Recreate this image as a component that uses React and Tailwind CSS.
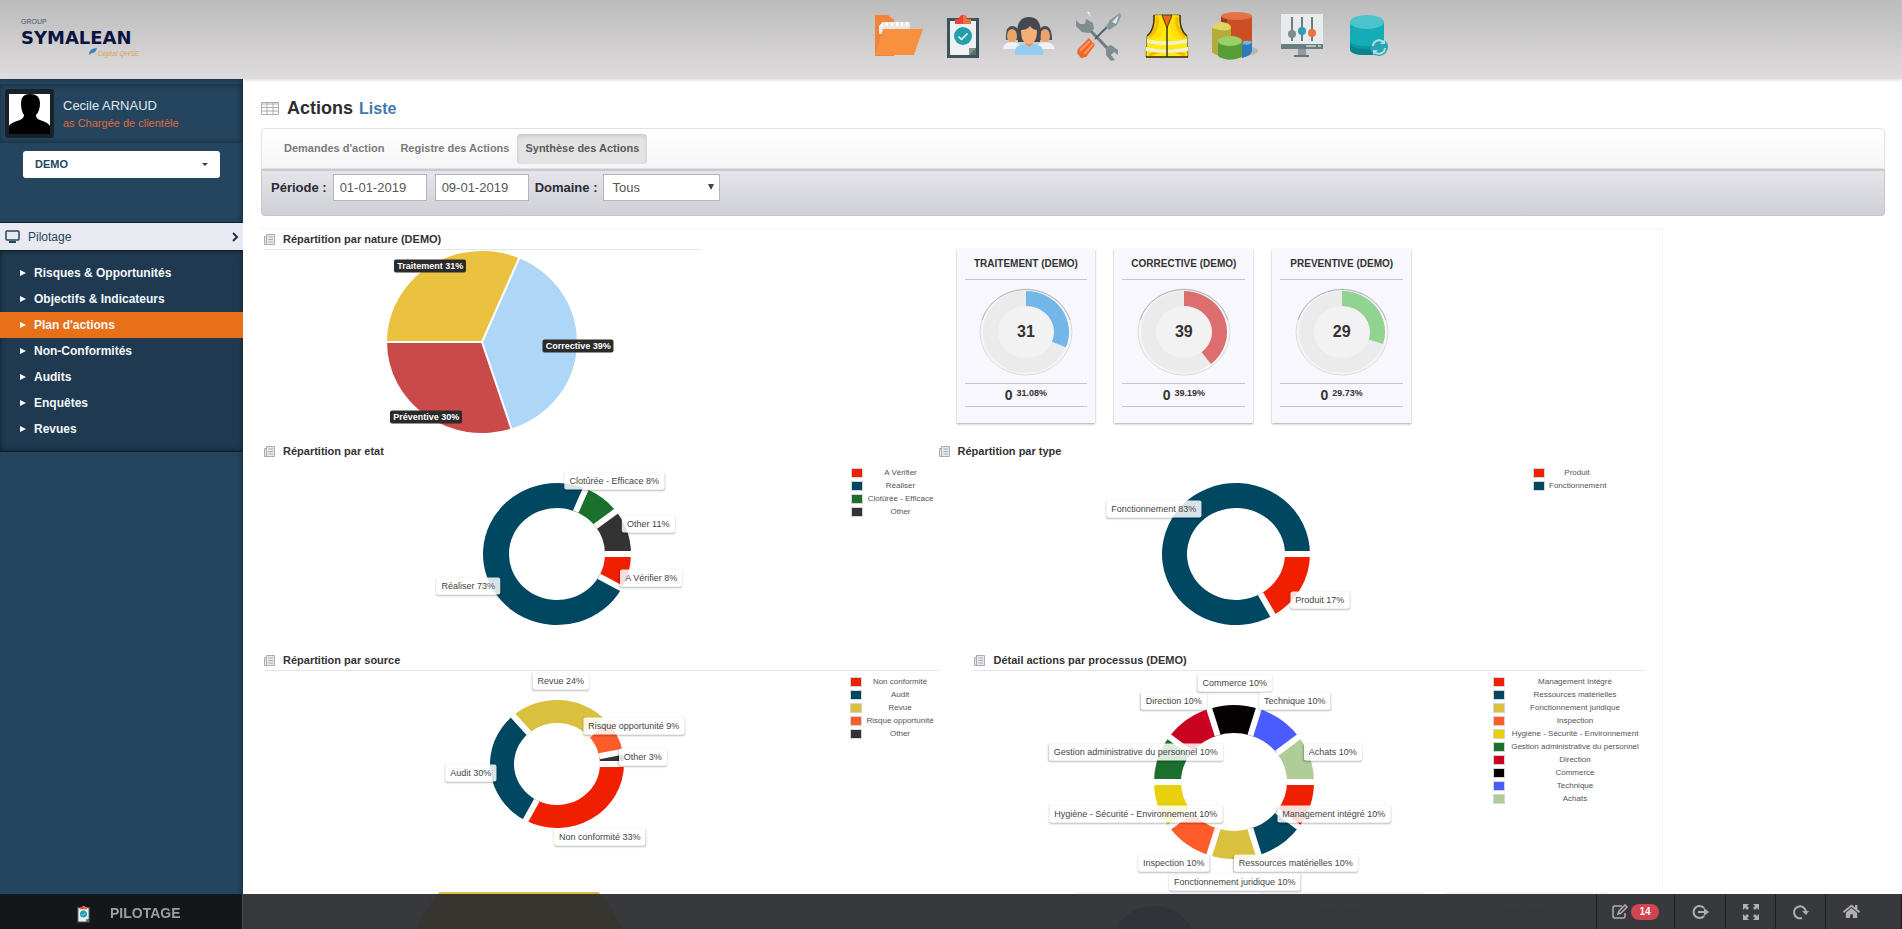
import { useState } from 'react';
import { FaHome } from 'react-icons/fa';

const MENU = ['Risques & Opportunités', 'Objectifs & Indicateurs', "Plan d'actions", 'Non-Conformités', 'Audits', 'Enquêtes', 'Revues'];
const TABS = ["Demandes d'action", 'Registre des Actions', 'Synthèse des Actions'];

const NATURE = [
    { label: 'Corrective 39%', from: -67, to: 72, color: '#aed6f7', dx: 96, dy: 4 },
    { label: 'Préventive 30%', from: 72, to: 180, color: '#c94a49', dx: -56, dy: 75 },
    { label: 'Traitement 31%', from: 180, to: 293, color: '#ebc23f', dx: -52, dy: -76 },
];

const ETAT = [
    { name: 'A Vérifier', label: 'A Vérifier 8%', from: 0, to: 29, color: '#f01f00', dx: 94, dy: 24 },
    { name: 'Réaliser', label: 'Réaliser 73%', from: 29, to: 293, color: '#004761', dx: -89, dy: 32 },
    { name: 'Clotûrée - Efficace', label: 'Clotûrée - Efficace 8%', from: 293, to: 323, color: '#1c702e', dx: 57, dy: -73 },
    { name: 'Other', label: 'Other 11%', from: 323, to: 360, color: '#333333', dx: 91, dy: -30 },
];

const TYPE = [
    { name: 'Produit', label: 'Produit 17%', from: 0, to: 60, color: '#f01f00', dx: 84, dy: 46 },
    { name: 'Fonctionnement', label: 'Fonctionnement 83%', from: 60, to: 360, color: '#004761', dx: -82, dy: -45 },
];

const SOURCE = [
    { name: 'Non conformité', label: 'Non conformité 33%', from: 0, to: 118, color: '#f01f00', dx: 43, dy: 73 },
    { name: 'Audit', label: 'Audit 30%', from: 118, to: 229, color: '#004761', dx: -86, dy: 9 },
    { name: 'Revue', label: 'Revue 24%', from: 229, to: 316, color: '#d9c13f', dx: 4, dy: -83 },
    { name: 'Risque opportunité', label: 'Risque opportunité 9%', from: 316, to: 349, color: '#ff5c2b', dx: 77, dy: -38 },
    { name: 'Other', label: 'Other 3%', from: 349, to: 360, color: '#333333', dx: 86, dy: -7 },
];

const PROCESSUS = [
    { name: 'Management Intégré', label: 'Management intégré 10%', from: 0, to: 36, color: '#f01f00', dx: 100, dy: 32 },
    { name: 'Ressources matérielles', label: 'Ressources matérielles 10%', from: 36, to: 72, color: '#004761', dx: 62, dy: 81 },
    { name: 'Fonctionnement juridique', label: 'Fonctionnement juridique 10%', from: 72, to: 108, color: '#d9c13f', dx: 1, dy: 100 },
    { name: 'Inspection', label: 'Inspection 10%', from: 108, to: 144, color: '#ff5c2b', dx: -60, dy: 81 },
    { name: 'Hygiène - Sécurité - Environnement', label: 'Hygiène - Sécurité - Environnement 10%', from: 144, to: 180, color: '#e8d10c', dx: -98, dy: 32 },
    { name: 'Gestion administrative du personnel', label: 'Gestion administrative du personnel 10%', from: 180, to: 216, color: '#1c702e', dx: -98, dy: -30 },
    { name: 'Direction', label: 'Direction 10%', from: 216, to: 252, color: '#c90221', dx: -60, dy: -81 },
    { name: 'Commerce', label: 'Commerce 10%', from: 252, to: 288, color: '#050003', dx: 1, dy: -99 },
    { name: 'Technique', label: 'Technique 10%', from: 288, to: 324, color: '#4a5cff', dx: 61, dy: -81 },
    { name: 'Achats', label: 'Achats 10%', from: 324, to: 360, color: '#b0cc99', dx: 99, dy: -30 },
];

const KPIS = [
    { title: 'TRAITEMENT (DEMO)', value: 31, pct: 31.08, color: '#72b6ea' },
    { title: 'CORRECTIVE (DEMO)', value: 39, pct: 39.19, color: '#dd6e6f' },
    { title: 'PREVENTIVE (DEMO)', value: 29, pct: 29.73, color: '#91d391' },
];

const point = (cx, cy, rx, ry, deg) => {
    const a = (deg * Math.PI) / 180;
    return [cx + rx * Math.cos(a), cy + ry * Math.sin(a)];
};

const slicePath = (cx, cy, rx, ry, ix, iy, from, to) => {
    const big = to - from > 180 ? 1 : 0;
    const [x1, y1] = point(cx, cy, rx, ry, from);
    const [x2, y2] = point(cx, cy, rx, ry, to);
    const [x3, y3] = point(cx, cy, ix, iy, to);
    const [x4, y4] = point(cx, cy, ix, iy, from);
    return `M${x1} ${y1}A${rx} ${ry} 0 ${big} 1 ${x2} ${y2}L${x3} ${y3}A${ix} ${iy} 0 ${big} 0 ${x4} ${y4}Z`;
};

const Chart = ({ data, cy, rx, ry, ix, iy, gap, dark }) => (
    <div className="relative flex-1">
        <svg width="400" height={cy + ry + 2} className="mx-auto block">
            {data.map(d => (
                <path key={d.label} d={slicePath(200, cy, rx, ry, ix, iy, d.from, d.to)} fill={d.color} />
            ))}
            {data.map(d => {
                const [x1, y1] = point(200, cy, ix, iy, d.from);
                const [x2, y2] = point(200, cy, rx + 2, ry + 2, d.from);
                return <line key={d.label} x1={x1} y1={y1} x2={x2} y2={y2} stroke="#fff" strokeWidth={gap} />;
            })}
        </svg>
        {data.map(d => (
            <span
                key={d.label}
                className={`absolute -translate-x-1/2 -translate-y-1/2 whitespace-nowrap rounded-[2px] text-[9px] ${dark
                    ? 'bg-[#2b2b2b] px-[3px] leading-[13px] font-bold text-white'
                    : 'bg-white/85 px-[5px] leading-[17px] text-[#444] shadow-[0_1px_2px_rgba(0,0,0,0.25)]'
                    }`}
                style={{ left: `calc(50% + ${d.dx}px)`, top: cy + d.dy }}
            >
                {d.label}
            </span>
        ))}
    </div>
);

const Legend = ({ data }) => (
    <ul className="pt-1">
        {data.map(d => (
            <li key={d.name} className="flex h-[13px] items-center">
                <span className="border border-[#d5d5d5]">
                    <span className="block h-2 w-[10px]" style={{ backgroundColor: d.color }} />
                </span>
                <span className="flex-1 whitespace-nowrap px-1 text-center text-[8px] leading-[13px] text-[#545454]">{d.name}</span>
            </li>
        ))}
    </ul>
);

const PanelTitle = ({ children, line }) => (
    <h3 className={`flex h-[21px] items-center gap-2 border-b text-[11px] font-bold text-[#333] ${line ? 'border-[#e5e5e5]' : 'border-transparent'}`}>
        <svg width="11" height="11" viewBox="0 0 11 11" fill="none" stroke="#a9adb3">
            <path d="M2.500.5h8v10h-10v-8h2zM2.500 1v9" fill="#e6e8eb" />
            <path d="M4.500 3h4.500M4.500 5.500h4.500M4.500 8h4.500" />
        </svg>
        {children}
    </h3>
);

const KpiCard = ({ kpi }) => (
    <div className="flex-1 bg-[#f7f7fd] px-2 pb-4 text-center text-[#333] shadow-[0_1px_2px_rgba(0,0,0,0.35)]">
        <h4 className="whitespace-nowrap border-b border-[#c4c6cf] text-[10px] leading-[30px] font-bold">{kpi.title}</h4>
        <div className="relative flex h-[103px] items-center justify-center">
            <svg width="96" height="92" viewBox="0 0 96 92">
                <ellipse cx="48" cy="46" rx="46" ry="43" fill="#f5f5f7" stroke="#dcdcdf" />
                <path d="M4 34A46 43 0 0 1 92 34" fill="none" stroke="#b4b6ba" />
                <ellipse cx="48" cy="46" rx="43" ry="41" fill="#ebebeb" />
                <ellipse cx="48" cy="46" rx="28" ry="26" fill="#f2f2f2" />
                <path d={slicePath(48, 46, 43, 41, 28, 26, -90, -90 + kpi.pct * 3.6)} fill={kpi.color} />
            </svg>
            <span className="absolute text-[16px] font-bold">{kpi.value}</span>
        </div>
        <p className="h-6 border-y border-[#c4c6cf] text-[14px] leading-[22px] font-bold">
            0 <sup className="text-[9px]">{kpi.pct}%</sup>
        </p>
    </div>
);

const Clipboard = ({ className }) => (
    <svg viewBox="0 0 34 46" className={className}>
        <path d="M1 5h32v40H1z" fill="#3b5359" />
        <path d="M4 8h26v27l-7 7H4z" fill="#eef1f1" />
        <path d="M23 42v-7h7z" fill="#7e9294" />
        <path d="M23 42h7v-7z" fill="#5b7174" />
        <path d="M9 11V6h4a4 4 0 0 1 8 0h4v5z" fill="#e8453c" />
        <path d="M17 2a4 4 0 0 1 4 4h4v5h-8z" fill="#f2703f" />
        <circle cx="17" cy="23" r="9" fill="#239fae" />
        <path d="M12.500 23.500l3 3 6-6" fill="none" stroke="#fff" strokeWidth="1.500" />
    </svg>
);

const Folder = () => (
    <svg viewBox="0 0 48 48" className="size-12">
        <path d="M0 4q0-1 1-1h12l6 5v36H0z" fill="#f08537" />
        <path d="M4 14l4-4h27v12H4z" fill="#e6e8ea" />
        <path d="M4 15l4-5v5z" fill="#fff" />
        <path d="M12 10v4M17 10v4M22 10v4M27 10v4M32 10v4" stroke="#fff" strokeWidth="2" />
        <path d="M8 17h40l-9 26H0z" fill="#f9903e" />
    </svg>
);

const Team = () => (
    <svg viewBox="0 0 52 46" className="h-[46px] w-[52px]">
        <path d="M3 27q-1-14 6-14 8 0 8 14zM35 27q0-14 7-14t7 14z" fill="#4b4e55" />
        <ellipse cx="9" cy="23" rx="5" ry="7" fill="#eaa56b" />
        <ellipse cx="42" cy="23" rx="5" ry="7" fill="#eaa56b" />
        <path d="M0 36q1-7 9-7t9 7zM34 36q0-7 8-7t10 7z" fill="#eef2f7" />
        <path d="M15 29Q11 4 26 4t11 25z" fill="#45484e" />
        <path d="M22 25h8v9h-8z" fill="#dd9460" />
        <path d="M18 17q6 0 9-4 3 4 7 4 0 14-8 14t-8-14z" fill="#f2b077" />
        <path d="M12 42v-4q0-6 10-7l4 3 4-3q10 1 10 7v4z" fill="#92cdf1" />
    </svg>
);

const Tools = () => (
    <svg viewBox="0 0 48 50" className="h-[50px] w-12">
        <path d="M12 16l23 24" stroke="#6e7b80" strokeWidth="3" />
        <path d="M1 9l4 4 5 0 1-5 7 4 1 6-5 4-7-1-6-6zM31 36l5-2 7 5v5l-4-3-3 3 4 5-4 1-5-6z" fill="#7f8c90" />
        <path d="M20 28L39 9" stroke="#55646a" strokeWidth="2" />
        <path d="M35 9l10-7 1 3-4 9-8 5-3-3z" fill="#87969a" />
        <path d="M37 11l7-7-3 9z" fill="#dfe8ea" />
        <path d="M3 38l11-11 6 7-9 12-5 1-4-5z" fill="#f3642a" />
        <path d="M5 40l10-10M9 43l9-10" stroke="#ff9a58" strokeWidth="2" />
        <path d="M12 1l4 5-2-5z" fill="#fff" />
    </svg>
);

const Vest = () => (
    <svg viewBox="0 0 44 46" className="h-[46px] w-11">
        <path d="M9 2h9l4 10 4-10h9q-1 16 7 21l1 21H1l1-21Q10 18 9 2z" fill="#fdea10" stroke="#8d7a10" />
        <path d="M9 3l8-1 3 8-4 14-14 5 1-6Q10 18 9 3zM35 3l-8-1-3 8 4 14 14 5-1-6Q34 18 35 3z" fill="#ffe000" />
        <path d="M12 4q2 12-8 20M32 4q-2 12 8 20M4 42l14-5M40 42l-14-5" fill="none" stroke="#f7b900" strokeWidth="3" />
        <path d="M17 2h10l-5 13z" fill="#ee6a17" stroke="#4b3a10" />
        <path d="M2 26q20 5 40 0v4q-20 4-40 0zM1 34q21 5 42 0v4q-21 4-42 0z" fill="#f1f2c9" />
        <path d="M22 14v30M9 2q1 15-7 21M35 2q-1 15 7 21M1 44h42" fill="none" stroke="#3c3510" strokeWidth="1.500" />
    </svg>
);

const Cylinders = () => (
    <svg viewBox="0 0 48 50" className="h-[50px] w-12">
        <ellipse cx="32" cy="40" rx="15" ry="5" fill="#8e8e8e" opacity=".4" />
        <path d="M10 5v32h31V5z" fill="#cc4e25" />
        <path d="M10 5v32h6V5z" fill="#9f3719" />
        <ellipse cx="25.500" cy="5" rx="15.500" ry="4" fill="#e57345" />
        <path d="M1 17v24q6 6 19 5V17z" fill="#b4ab3a" />
        <path d="M1 17q2-6 10-6 9 1 9 6-4 5-19 0z" fill="#ded663" />
        <path d="M7 30v15q10 7 24 1V30z" fill="#569d35" />
        <ellipse cx="19" cy="30" rx="12" ry="5" fill="#9bcf67" />
        <path d="M31 33v14q9-2 10-7v-9z" fill="#2f78ba" />
        <path d="M31 33l2-3q6-1 8 1-2 4-10 2z" fill="#78b5e4" />
    </svg>
);

const Monitor = () => (
    <svg viewBox="0 0 42 46" className="h-[46px] w-[42px]">
        <path d="M0 1h42v31H0z" fill="#e8ebec" />
        <path d="M0 31h42v5H0z" fill="#6b7d80" />
        <path d="M17 36h8v6h-8z" fill="#8e9c9f" />
        <path d="M13 42h15v2H13z" fill="#64767a" />
        <path d="M25 33h10M37 33h3" stroke="#fff" />
        <path d="M11 4v24M21 4v24M31 4v24" stroke="#44595e" strokeWidth="1.500" />
        <circle cx="11" cy="21" r="4" fill="#7d8b8e" />
        <circle cx="21" cy="18" r="4" fill="#2c9fb5" />
        <circle cx="31" cy="20" r="4" fill="#f2703f" />
    </svg>
);

const Database = () => (
    <svg viewBox="0 0 40 46" className="h-[46px] w-10">
        <path d="M1 9v27q0 6 17 6t17-6V9z" fill="#0b98a3" />
        <path d="M1 9v18q0 6 17 6t17-6V9z" fill="#12adb6" />
        <path d="M1 36q0 6 17 6t17-6v-5q-2 5-17 5T1 31z" fill="#0a8590" />
        <ellipse cx="18" cy="9" rx="17" ry="7" fill="#4dc4cd" />
        <circle cx="30" cy="34" r="9" fill="#2aa3b3" />
        <path d="M24 33a6 6 0 0 1 11-3M36 35a6 6 0 0 1-11 3" fill="none" stroke="#a9e0e6" strokeWidth="2" />
        <path d="M36 26v5h-5zM24 42v-5h5z" fill="#a9e0e6" />
    </svg>
);

const Logo = () => (
    <svg width="124" height="44" viewBox="0 0 124 44">
        <text x="0" y="8" fontFamily="Liberation Sans" fontSize="7" fill="#4a5068">GROUP</text>
        <text x="0" y="28" fontFamily="DejaVu Sans" fontWeight="bold" fontSize="18" fill="#0a1440">SYMALEAN</text>
        <path d="M68 39q0-7 8-7-1 5-5 5z" fill="#3b86b8" />
        <text x="77" y="40" fontFamily="Liberation Sans" fontStyle="italic" fontSize="7" fill="#d9a45a">Digital QHSE</text>
    </svg>
);

const Header = () => (
    <header className="relative z-10 flex h-[79px] bg-linear-to-b from-[#bcbcbc] to-[#dfdcdd] shadow-[0_1px_3px_rgba(0,0,0,0.15)]">
        <a href="#accueil" className="w-[46%] pt-4 pl-[21px]"><Logo /></a>
        <nav className="flex h-[71px] items-center gap-5">
            <a href="#documents"><Folder /></a>
            <a href="#pilotage" className="px-[3px]"><Clipboard className="h-[46px] w-[34px]" /></a>
            <a href="#equipe"><Team /></a>
            <a href="#outils"><Tools /></a>
            <a href="#securite" className="px-0.5"><Vest /></a>
            <a href="#statistiques"><Cylinders /></a>
            <a href="#reglages" className="px-0.5"><Monitor /></a>
            <a href="#donnees" className="pl-1"><Database /></a>
        </nav>
    </header>
);

const Sidebar = () => (
    <aside className="w-[243px] shrink-0 bg-[#25455f] shadow-[inset_-3px_0_4px_rgba(0,0,0,0.2)]">
        <div className="mt-[5px] flex items-center gap-[9px] border-y border-[#1d374d] py-1 pl-[5px] shadow-[inset_0_0_5px_rgba(0,0,0,0.35)]">
            <svg width="49" height="49" viewBox="0 0 49 49">
                <rect width="49" height="49" rx="3" fill="#1b2128" />
                <path d="M4 5h41v40H4z" fill="#fff" />
                <path d="M4 45V37q1-3 11-6 4-2 4-5-3-4-3-12 0-9 9-9 10 0 10 9 0 8-4 12 0 4 4 5 9 3 10 6v8z" fill="#000" />
            </svg>
            <div>
                <p className="text-[13px] leading-[18px] text-[#dfe9f2]">Cecile ARNAUD</p>
                <p className="text-[11px] leading-[16px] text-[#e0683a]">as Chargée de clientèle</p>
            </div>
        </div>
        <div className="relative mx-[23px] mt-2 mb-11">
            <select aria-label="Société" className="block h-[27px] w-full appearance-none rounded-[3px] bg-white px-3 text-[11px] font-bold text-[#25455f]">
                <option>DEMO</option>
            </select>
            <span className="pointer-events-none absolute top-3 right-3 border-x-[3px] border-t-[3px] border-x-transparent border-t-[#25455f]" />
        </div>
        <button className="flex h-7 w-full items-center gap-2 border-t border-[#10202e] bg-[#e8e9f1] pr-1 pl-[5px] text-left text-[12px] text-[#25455f]">
            <svg width="15" height="13" viewBox="0 0 15 13" fill="none" stroke="#25455f" strokeWidth="1.500">
                <rect x="1" y="1" width="13" height="9" rx="1" />
                <path d="M4 12h7" strokeWidth="2" />
            </svg>
            <span className="flex-1">Pilotage</span>
            <svg width="7" height="10" viewBox="0 0 7 10" fill="none" stroke="#1b3346" strokeWidth="2">
                <path d="M1 1l4 4-4 4" />
            </svg>
        </button>
        <ul className="border-y border-[#0f1f2c] bg-[#1f3a50] py-[9px] shadow-[inset_0_0_5px_rgba(0,0,0,0.5)]">
            {MENU.map(item => (
                <li key={item}>
                    <a
                        href="#menu"
                        className={`flex h-[26px] items-center gap-2 pl-5 text-[12px] font-bold text-[#f4f7fa] ${item === "Plan d'actions" ? 'bg-[#e87019]' : ''}`}
                    >
                        <svg width="6" height="6" viewBox="0 0 6 6"><path d="M0 0l6 3-6 3z" fill="#fff" /></svg>
                        {item}
                    </a>
                </li>
            ))}
        </ul>
    </aside>
);

const Filters = () => {
    const [start, setStart] = useState('01-01-2019');
    const [end, setEnd] = useState('09-01-2019');

    return (
        <form className="flex h-[47px] items-start rounded-b border border-t-2 border-[#c8c8cd] bg-linear-to-b from-[#e4e4ea] to-[#cfcfd6] px-[9px] pt-[3px] text-[13px] text-[#555]">
            <label htmlFor="start" className="mr-1.5 leading-[27px] font-bold text-[#2b2b33]">Période :</label>
            <input id="start" value={start} onChange={e => setStart(e.target.value)} className="h-[27px] w-[94px] border border-[#b5b5bd] bg-white px-1.5" />
            <input aria-label="Fin de période" value={end} onChange={e => setEnd(e.target.value)} className="mr-1.5 ml-2 h-[27px] w-[94px] border border-[#b5b5bd] bg-white px-1.5" />
            <label htmlFor="domaine" className="mr-1.5 leading-[27px] font-bold text-[#2b2b33]">Domaine :</label>
            <div className="relative">
                <select id="domaine" className="block h-[27px] w-[117px] appearance-none border border-[#b5b5bd] bg-white px-2">
                    <option>Tous</option>
                </select>
                <span className="pointer-events-none absolute top-[10px] right-[6px] border-x-[3px] border-t-[6px] border-x-transparent border-t-[#444]" />
            </div>
        </form>
    );
};

const Footer = () => (
    <footer className="fixed inset-x-0 bottom-0 z-20 flex h-[35px] bg-[#292a2e]/93 text-[#b0b0b0]">
        <div className="flex w-[243px] items-center gap-[19px] border-r border-[#4a4b50] bg-[#15161a] pt-1 pl-[76px]">
            <Clipboard className="h-[18px] w-[15px]" />
            <span className="text-[14px] font-bold text-[#9d9d9f]">PILOTAGE</span>
        </div>
        <div className="ml-auto flex divide-x divide-[#1c1d20] border-x border-[#1c1d20] pr-6">
            <button aria-label="Notes" className="flex w-[78px] items-center justify-center gap-0.5">
                <svg width="17" height="16" viewBox="0 0 17 16" fill="none" stroke="currentColor" strokeWidth="1.500">
                    <path d="M10 2H3Q1 2 1 4v8q0 2 2 2h8q2 0 2-2V9" />
                    <path d="M6 10l1-3 6-6 2 2-6 6z" />
                </svg>
                <span className="rounded-full bg-[#cf4650] px-2 text-[10px] leading-4 font-bold text-white">14</span>
            </button>
            <button aria-label="Déconnexion" className="flex w-[51px] items-center justify-center">
                <svg width="18" height="16" viewBox="0 0 18 16" fill="none" stroke="currentColor" strokeWidth="2">
                    <path d="M13 4a6 6 0 1 0 0 8M7 8h7" />
                    <path d="M13 4l5 4-5 4z" fill="currentColor" stroke="none" />
                </svg>
            </button>
            <button aria-label="Plein écran" className="flex w-[50px] items-center justify-center">
                <svg width="16" height="16" viewBox="0 0 16 16" fill="currentColor">
                    <path d="M0 0h6L4 2l2 2-2 2-2-2-2 2zM16 0v6l-2-2-2 2-2-2 2-2-2-2zM0 16v-6l2 2 2-2 2 2-2 2 2 2zM16 16h-6l2-2-2-2 2-2 2 2 2-2z" />
                </svg>
            </button>
            <button aria-label="Actualiser" className="flex w-[50px] items-center justify-center">
                <svg width="17" height="16" viewBox="0 0 17 16" fill="none" stroke="currentColor" strokeWidth="2">
                    <path d="M10 14a6 6 0 1 1 4-6" />
                    <path d="M10 7h7l-3 4z" fill="currentColor" stroke="none" />
                </svg>
            </button>
            <a href="#accueil" aria-label="Accueil" className="flex w-[51px] items-center justify-center">
                <FaHome size={17} />
            </a>
        </div>
    </footer>
);

export default function App() {
    const [tab, setTab] = useState(TABS[2]);

    return (
        <div className="flex h-screen flex-col overflow-hidden bg-white font-['Liberation_Sans',Arial,sans-serif]">
            <Header />
            <div className="flex min-h-0 flex-1">
                <Sidebar />
                <main className="min-w-0 flex-1 pr-[17px] pl-[18px]">
                    <h1 className="flex h-[49px] items-center pt-[10px] text-[18px] font-bold text-[#2e2e2e]">
                        <svg width="18" height="13" viewBox="0 0 18 13" fill="none" stroke="#a9adb3" className="mr-2">
                            <path d="M.5.5h17v12H.5zM.5 2h17M.5 5.500h17M.5 9h17M6 1v12M12 1v12" />
                        </svg>
                        Actions
                        <small className="ml-[6px] text-[16px] text-[#3f79ad]">Liste</small>
                    </h1>
                    <nav className="flex h-[41px] items-center rounded-t border border-[#e2e2e2] bg-linear-to-b from-white to-[#f5f5f5] pl-[14px] text-[11px] font-bold text-[#7a7a7a]">
                        {TABS.map(t => (
                            <button
                                key={t}
                                onClick={() => setTab(t)}
                                className={`h-[30px] rounded-sm px-2 ${t === tab ? 'bg-[#e3e3e3] text-[#5a5a5a] shadow-[inset_0_2px_4px_rgba(0,0,0,0.12)]' : ''}`}
                            >
                                {t}
                            </button>
                        ))}
                    </nav>
                    <Filters />

                    <div className="mt-3 mr-[222px] border-t border-r border-[#f3f3f3] pl-[3px]">
                        {/* Nature + indicators */}
                        <div className="grid h-[212px] grid-cols-[437fr_256fr_455fr_251fr]">
                            <section className="flex flex-col">
                                <PanelTitle line>Répartition par nature (DEMO)</PanelTitle>
                                <Chart data={NATURE} cy={92} rx={95} ry={91} ix={0} iy={0} gap={2} dark />
                            </section>
                            <div />
                            <div className="flex items-start gap-[19px] pt-5">
                                {KPIS.map(k => <KpiCard key={k.title} kpi={k} />)}
                            </div>
                        </div>

                        {/* Etat + type */}
                        <div className="grid h-[209px] grid-cols-[675fr_671fr_53fr]">
                            <section>
                                <PanelTitle>Répartition par etat</PanelTitle>
                                <div className="flex">
                                    <Chart data={ETAT} cy={92} rx={74} ry={71} ix={48} iy={46} gap={6} />
                                    <div className="w-[88px]"><Legend data={ETAT} /></div>
                                </div>
                            </section>
                            <section>
                                <PanelTitle>Répartition par type</PanelTitle>
                                <div className="flex">
                                    <Chart data={TYPE} cy={92} rx={74} ry={71} ix={49} iy={46} gap={6} />
                                    <div className="w-[76px]"><Legend data={TYPE} /></div>
                                </div>
                            </section>
                        </div>

                        {/* Source + processus */}
                        <div className="grid h-[242px] grid-cols-[675fr_36fr_671fr_17fr]">
                            <section>
                                <PanelTitle line>Répartition par source</PanelTitle>
                                <div className="flex">
                                    <Chart data={SOURCE} cy={93} rx={67} ry={64} ix={43} iy={41} gap={6} />
                                    <div className="w-[89px]"><Legend data={SOURCE} /></div>
                                </div>
                            </section>
                            <div />
                            <section>
                                <PanelTitle line>Détail actions par processus (DEMO)</PanelTitle>
                                <div className="flex">
                                    <Chart data={PROCESSUS} cy={111} rx={80} ry={77} ix={53} iy={49} gap={6} />
                                    <div className="w-[152px]"><Legend data={PROCESSUS} /></div>
                                </div>
                            </section>
                        </div>
                    </div>

                    {/* Next row, mostly under the footer */}
                    <div className="flex gap-5 pl-36">
                        <svg width="220" height="40" viewBox="0 0 220 40" className="mr-[429px]">
                            <circle cx="114" cy="76" r="110" fill="#d9bf41" />
                        </svg>
                        {['#8ea6c4', '#ebebeb', '#ebebeb'].map((c, i) => (
                            <svg key={i} width="165" height="40" viewBox="0 0 165 40">
                                <path d="M0 0h165v40H0z" fill="#f7f7fd" />
                                <circle cx="80" cy="58" r="44" fill={c} />
                            </svg>
                        ))}
                    </div>
                </main>
            </div>
            <Footer />
        </div>
    );
}
